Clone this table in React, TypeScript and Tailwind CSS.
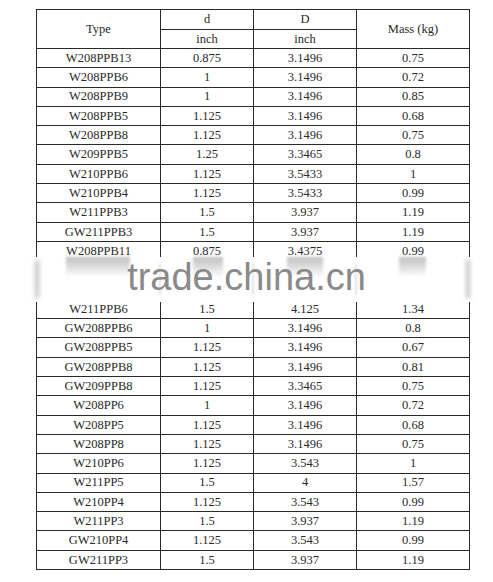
const rows: string[][] = [
  ['W208PPB13', '0.875', '3.1496', '0.75'],
  ['W208PPB6', '1', '3.1496', '0.72'],
  ['W208PPB9', '1', '3.1496', '0.85'],
  ['W208PPB5', '1.125', '3.1496', '0.68'],
  ['W208PPB8', '1.125', '3.1496', '0.75'],
  ['W209PPB5', '1.25', '3.3465', '0.8'],
  ['W210PPB6', '1.125', '3.5433', '1'],
  ['W210PPB4', '1.125', '3.5433', '0.99'],
  ['W211PPB3', '1.5', '3.937', '1.19'],
  ['GW211PPB3', '1.5', '3.937', '1.19'],
  ['W208PPB11', '0.875', '3.4375', '0.99'],
  ['', '', '', ''],
  ['', '', '', ''],
  ['W211PPB6', '1.5', '4.125', '1.34'],
  ['GW208PPB6', '1', '3.1496', '0.8'],
  ['GW208PPB5', '1.125', '3.1496', '0.67'],
  ['GW208PPB8', '1.125', '3.1496', '0.81'],
  ['GW209PPB8', '1.125', '3.3465', '0.75'],
  ['W208PP6', '1', '3.1496', '0.72'],
  ['W208PP5', '1.125', '3.1496', '0.68'],
  ['W208PP8', '1.125', '3.1496', '0.75'],
  ['W210PP6', '1.125', '3.543', '1'],
  ['W211PP5', '1.5', '4', '1.57'],
  ['W210PP4', '1.125', '3.543', '0.99'],
  ['W211PP3', '1.5', '3.937', '1.19'],
  ['GW210PP4', '1.125', '3.543', '0.99'],
  ['GW211PP3', '1.5', '3.937', '1.19'],
];

const cell =
  "border border-[#2a2a2a] p-0 text-center align-middle font-normal font-['Liberation_Serif','Times_New_Roman',serif]";

// smeared text left behind by the watermark (left offset, width)
const smears = [
  { left: 66, width: 64 },
  { left: 193, width: 30 },
  { left: 287, width: 36 },
  { left: 399, width: 27 },
];

export default function App() {
  return (
    <div className="relative w-[493px] h-[582px] bg-white overflow-hidden font-['Liberation_Serif','Times_New_Roman',serif]">
      <div className="pt-[9px] pl-[36px]">
        <table className="w-[433px] table-fixed border-collapse text-[12.5px] leading-none text-[#2a2a2a]">
          <colgroup>
            <col className="w-[124px]" />
            <col className="w-[93px]" />
            <col className="w-[103px]" />
            <col className="w-[113px]" />
          </colgroup>
          <thead>
            <tr className="h-[19.5px]">
              <th rowSpan={2} className={cell}>Type</th>
              <th className={cell}>d</th>
              <th className={cell}>D</th>
              <th rowSpan={2} className={cell}>Mass (kg)</th>
            </tr>
            <tr className="h-[19.5px]">
              <th className={cell}>inch</th>
              <th className={cell}>inch</th>
            </tr>
          </thead>
          <tbody>
            {rows.map((r, i) => (
              <tr key={i} className="h-[19.3px]">
                {r.map((v, j) => (
                  <td key={j} className={cell}>{v}</td>
                ))}
              </tr>
            ))}
          </tbody>
        </table>
      </div>

      {/* watermark band laid over the table */}
      <div className="absolute left-0 top-[257px] w-[493px] h-[45px] bg-white">
        <div className="absolute left-[35px] top-[3px] w-[4px] h-[38px] bg-[#c4c4c4] blur-[2px]" />
        <div className="absolute left-[159px] top-[6px] w-[2px] h-[32px] bg-[#e2e2e2] blur-[1px]" />
        <div className="absolute left-[252px] top-[6px] w-[2px] h-[32px] bg-[#e2e2e2] blur-[1px]" />
        <div className="absolute left-[355px] top-[6px] w-[2px] h-[32px] bg-[#e2e2e2] blur-[1px]" />
        <div className="absolute left-[466px] top-[3px] w-[4px] h-[38px] bg-[#c4c4c4] blur-[2px]" />
        {smears.map((s, i) => (
          <div
            key={i}
            className="absolute top-0 h-[20px] bg-gradient-to-b from-[#b0b0b0] via-[#d6d6d6] to-white blur-[1.5px] opacity-80"
            style={{ left: s.left, width: s.width }}
          />
        ))}
        <div className="absolute left-0 top-[6px] w-full text-center text-[38px] leading-[28px] text-[#8a8a8a] font-['Liberation_Sans',Arial,sans-serif]">
          trade.china.cn
        </div>
      </div>
    </div>
  );
}
